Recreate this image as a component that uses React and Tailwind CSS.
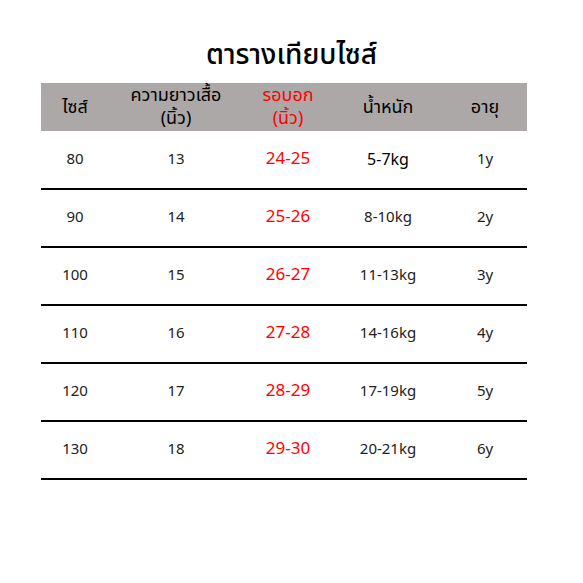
const rows = [
  ['80', '13', '24-25', '5-7kg', '1y'],
  ['90', '14', '25-26', '8-10kg', '2y'],
  ['100', '15', '26-27', '11-13kg', '3y'],
  ['110', '16', '27-28', '14-16kg', '4y'],
  ['120', '17', '28-29', '17-19kg', '5y'],
  ['130', '18', '29-30', '20-21kg', '6y'],
];

const cols = 'grid grid-cols-[68px_134px_90px_110px_84px]';

export default function App() {
  return (
    <div
      className="w-[583px] h-[583px] bg-white flex flex-col"
      style={{ fontFamily: 'Tahoma, "Noto Sans Thai", "Noto Sans", "Liberation Sans", sans-serif' }}
    >
      <h1 className="mt-[36px] h-[40px] text-center text-[28px] font-medium text-black leading-[40px]">ตารางเทียบไซส์</h1>
      <div className="mt-[7px] ml-[41px] w-[486px]">
        {/* Header */}
        <div className={`${cols} h-[48px] bg-[#aca8a8] items-center text-center text-[18px] leading-[23px] text-black`}>
          <div>ไซส์</div>
          <div className="flex flex-col">
            <span>ความยาวเสื้อ</span>
            <span>(นิ้ว)</span>
          </div>
          <div className="flex flex-col text-[#ff0000]">
            <span>รอบอก</span>
            <span>(นิ้ว)</span>
          </div>
          <div>น้ำหนัก</div>
          <div>อายุ</div>
        </div>
        <div className="mt-[1px]">
          {rows.map((r, i) => (
            <div key={i} className={`${cols} h-[58px] items-center text-center border-b-2 border-black text-[15px] text-[#222]`}>
              <div>{r[0]}</div>
              <div>{r[1]}</div>
              <div className="text-[17px] text-[#ff0000]">{r[2]}</div>
              <div className={i === 0 ? 'text-[16px] text-black' : ''}>{r[3]}</div>
              <div>{r[4]}</div>
            </div>
          ))}
        </div>
      </div>
    </div>
  );
}
